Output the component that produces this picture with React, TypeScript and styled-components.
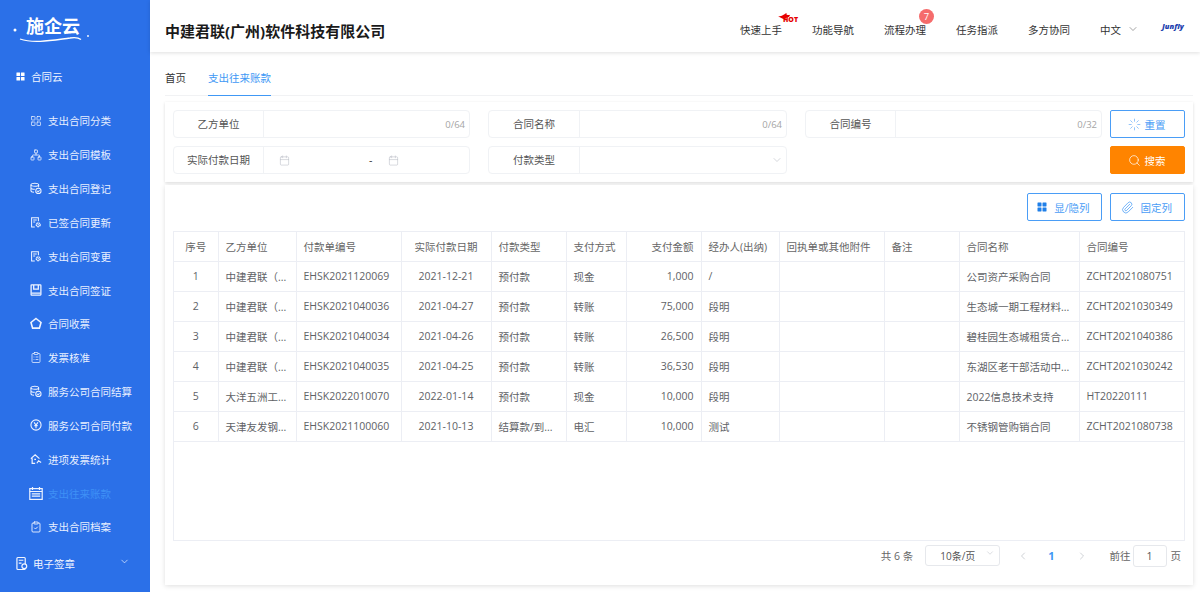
import React from 'react';
import styled, { createGlobalStyle } from 'styled-components';
import { LayoutGrid, Network, ClipboardList, Calendar, ClipboardCheck, ChevronDown, ChevronLeft, ChevronRight, Search, Paperclip, Loader } from 'lucide-react';

const Global = createGlobalStyle`
  html, body { margin: 0; padding: 0; width: 1200px; height: 592px; overflow: hidden; background: #fff; }
  body, button, input { font-family: "Open Sans", "Noto Sans CJK SC", sans-serif; }
  * { box-sizing: border-box; }
`;

const Page = styled.div`display: flex; width: 1200px; height: 592px; overflow: hidden;`;
const Sidebar = styled.aside`width: 150px; flex: none; background: #2b70e8; color: #fff; display: flex; flex-direction: column;`;
const LogoBox = styled.div`height: 52px; flex: none; display: flex; padding: 14px 0 0 26px; position: relative;`;
const LogoText = styled.div`font-size: 18px; font-weight: 700; line-height: 24px; color: #fff; white-space: nowrap;`;
const LogoSwoosh = styled.svg`position: absolute; left: 11px; top: 26px;`;
const GroupRow = styled.div<{ $mt: number; $gap: number }>`display: flex; align-items: center; gap: ${p => p.$gap}px; padding-left: 16px; margin-top: ${p => p.$mt}px; height: 20px; font-size: 10.5px; position: relative; color: #f1f5ff;`;
const GroupChevron = styled.span`position: absolute; left: 119px; top: 2px; display: flex;`;
const MenuList = styled.nav`display: flex; flex-direction: column; margin-top: 18px;`;
const MenuItem = styled.div<{ $active?: boolean }>`height: 33.83px; display: flex; align-items: center; gap: 6px; padding-left: 30px; font-size: 10.5px; color: ${p => (p.$active ? '#3f90f6' : '#e8efff')};`;
const MenuIcon = styled.span`width: 12px; height: 14px; display: flex; align-items: center; justify-content: center; color: #eef3ff;`;

const Main = styled.main`flex: 1; min-width: 0; display: flex; flex-direction: column; background: #fff;`;
const Header = styled.header`height: 52px; flex: none; display: flex; align-items: center; padding: 8px 0 0 15px; box-shadow: 0 1px 4px rgba(0, 0, 0, 0.13); position: relative; z-index: 2; background: #fff;`;
const Title = styled.h1`font-size: 15px; margin: 0; font-weight: 700; color: #1a1a1a; flex: 1; white-space: nowrap;`;
const TopNav = styled.div`display: flex; align-items: center; font-size: 10.5px; color: #333; position: relative; top: -1px;`;
const NavItem = styled.span`width: 72px; position: relative; white-space: nowrap;`;
const Hot = styled.span`position: absolute; left: 37px; top: -12px; width: 19px; height: 11px;`;
const HotText = styled.span`font-size: 7px; font-weight: 800; color: #e60000; line-height: 7px; position: absolute; left: 6px; top: 6px;`;
const Badge = styled.span`position: absolute; left: 35px; top: -13px; width: 15px; height: 15px; border-radius: 50%; background: #f56c6c; color: #fff; font-size: 9.5px; line-height: 15px; text-align: center;`;
const Lang = styled.span`width: 62px; display: flex; align-items: center; gap: 6px;`;
const BrandLogo = styled.span`width: 38px; font-size: 7.5px; font-weight: 800; font-style: italic; color: #1d3fae; position: relative; top: -3px;`;

const Tabs = styled.div`height: 34px; margin: 10px 7px 0 15px; flex: none; display: flex; border-bottom: 1px solid #f1f2f4; font-size: 10.5px; color: #333;`;
const Tab = styled.div<{ $active?: boolean }>`height: 34px; line-height: 32px; margin-right: 22px; color: ${p => (p.$active ? '#4098f5' : '#333')}; border-bottom: ${p => (p.$active ? '1.5px solid #4098f5' : '0')};`;

const FilterPanel = styled.section`margin: 6px 7px 0 15px; height: 80px; flex: none; padding: 8px 8px 0 8px; display: flex; gap: 8px; box-shadow: 0 1px 3px rgba(0, 0, 0, 0.14); background: #fff;`;
const FilterGrid = styled.div`display: grid; grid-template-columns: 297px 299px 297px; grid-auto-rows: 28px; column-gap: 18px; row-gap: 8px;`;
const Field = styled.div`display: flex; border: 1px solid #f0f2f5; border-radius: 4px; height: 28px; font-size: 10.5px; color: #555;`;
const FieldLabel = styled.div<{ $w?: number }>`width: ${p => p.$w ?? 90}px; flex: none; text-align: center; line-height: 26px; border-right: 1px solid #f0f2f5;`;
const FieldBody = styled.div<{ $pr?: number }>`flex: 1; display: flex; align-items: center; justify-content: flex-end; padding-right: ${p => p.$pr ?? 4}px; color: #a5a5a5; font-size: 9.5px;`;
const DateBody = styled.div`flex: 1; display: flex; align-items: center; padding-left: 15px; color: #333;`;
const DateDash = styled.span`margin: 0 16px 0 79px; font-size: 10.5px;`;
const Actions = styled.div`display: flex; flex-direction: column; gap: 8px;`;
const Btn = styled.button<{ $primary?: boolean }>`width: 75px; height: 28px; border-radius: 2px; border: 1px solid ${p => (p.$primary ? '#ff8400' : '#4a9df6')}; background: ${p => (p.$primary ? '#ff8400' : '#fff')}; color: ${p => (p.$primary ? '#fff' : '#4a9df6')}; font-size: 10.5px; display: flex; align-items: center; justify-content: center; gap: 4px; padding: 0 2px 0 0;`;

const TablePanel = styled.section`margin: 3px 7px 0 15px; height: 400px; flex: none; padding: 8px; box-shadow: 0 1px 5px rgba(0, 0, 0, 0.13); display: flex; flex-direction: column; background: #fff;`;
const Toolbar = styled.div`display: flex; justify-content: flex-end; gap: 8px; height: 38px; flex: none;`;
const TableWrap = styled.div`height: 310px; flex: none; border: 1px solid #eceef4;`;
const Table = styled.table`border-collapse: collapse; table-layout: fixed; width: 1010px; font-size: 10.5px; color: #606266;`;
const Th = styled.th<{ $a?: string }>`height: 29px; font-weight: 400; color: #666; text-align: ${p => p.$a ?? 'left'}; padding: 0 7px; border-right: 1px solid #eceef4; border-bottom: 1px solid #eceef4; white-space: nowrap; &:last-child { border-right: 0; }`;
const Td = styled.td<{ $a?: string }>`height: 30px; padding: 0 7px; text-align: ${p => p.$a ?? 'left'}; border-right: 1px solid #eceef4; border-bottom: 1px solid #eceef4; white-space: nowrap; &:last-child { border-right: 0; }`;

const Pager = styled.div`display: flex; align-items: center; justify-content: flex-end; height: 28px; font-size: 10.5px; color: #666; padding: 1px 4px 0 0;`;
const PageSelect = styled.div`width: 75px; height: 21px; border: 1px solid #e6e8ec; border-radius: 3px; margin: 0 17px 0 12px; display: flex; align-items: center; font-size: 10px; padding-left: 14px; position: relative; color: #555;`;
const SelectChevron = styled.span`position: absolute; right: 4px; top: 2px; display: flex;`;
const PageNum = styled.span`color: #4098f5; font-weight: 700; margin: 0 21px 0 19px; font-size: 11px;`;
const PageInput = styled.div`width: 34px; height: 22px; border: 1px solid #e6e8ec; border-radius: 3px; text-align: center; line-height: 20px; margin: 0 4px 0 2px; color: #555;`;
const PrevNext = styled.span<{ $mr?: number }>`display: flex; color: #b5b9c0; margin-right: ${p => p.$mr ?? 0}px;`;

const DbCheck = () => (
  <svg width="15" height="15" viewBox="0 0 15 15" fill="none" stroke="currentColor" strokeWidth={1.3}>
    <ellipse cx="6" cy="2.8" rx="4.8" ry="1.9" />
    <path d="M1.2 2.8v7.4c0 1 1.6 1.8 3.8 1.9M10.8 2.8v3M1.2 6.5c0 1 2.2 1.9 4.8 1.9" />
    <circle cx="10.5" cy="10.5" r="3.3" />
    <path d="M9 10.5l1.2 1.2 1.8-2" />
  </svg>
);
const FileGear = () => (
  <svg width="15" height="15" viewBox="0 0 15 15" fill="none" stroke="currentColor" strokeWidth={1.3}>
    <path d="M6 13H2V1.5h8.500V6" />
    <path d="M4 4.5h4.500M4 7h2.500" />
    <circle cx="10.3" cy="10.3" r="2.4" strokeWidth={1.7} strokeDasharray="2 .6" />
    <circle cx="10.3" cy="10.3" r=".8" fill="currentColor" stroke="none" />
  </svg>
);
const BookIcon = () => (
  <svg width="14" height="14" viewBox="0 0 13 13" fill="none" stroke="currentColor" strokeWidth={1.4}>
    <rect x="1.2" y="1" width="10.6" height="11" rx="0.5" />
    <path d="M4 1v4.6h5V1M1.5 9.8h10" />
  </svg>
);
const HomeShape = () => (
  <svg width="13" height="13" viewBox="0 0 12 12" fill="none" stroke="currentColor" strokeWidth={1.6}>
    <path d="M6 1 11 5 9.4 10.6H2.6L1 5z" />
  </svg>
);
const YenCircle = () => (
  <svg width="14" height="14" viewBox="0 0 13 13" fill="none" stroke="currentColor" strokeWidth={1.2}>
    <circle cx="6.5" cy="6.5" r="5.5" />
    <path d="M4.4 3.6 6.5 6.5 8.6 3.6M6.5 6.5V10M4.7 7.2h3.6" />
  </svg>
);
const HouseChart = () => (
  <svg width="15" height="14" viewBox="0 0 14 13" fill="none" stroke="currentColor" strokeWidth={1.4}>
    <path d="M1 6 6 1.5 11 6M2.5 5.5V11.500H6M8 11.500l2-3 3 2" />
    <path d="M5 7h2" />
  </svg>
);
const FileSeal = () => (
  <svg width="12" height="15" viewBox="0 0 13 15" fill="none" stroke="currentColor" strokeWidth={1.3}>
    <rect x="1" y="1" width="9" height="13" rx="1" />
    <path d="M3 4h5M3 7h3" />
    <circle cx="9" cy="10.5" r="2.6" fill="#2b70e8" />
  </svg>
);
const LedgerCalendar = () => (
  <svg width="14" height="13" viewBox="0 0 14 13" fill="none" stroke="currentColor" strokeWidth={1.2} style={{ flex: 'none' }}>
    <rect x="0.8" y="1.6" width="12.400" height="10.800" />
    <path d="M3.500 0v3M10.500 0v3M.8 4.500h12.400M2.800 6.800h8.400M2.800 9.200h8.400" />
  </svg>
);
const FourSquares = ({ size, color }: { size: number; color: string }) => (
  <svg width={size} height={size} viewBox="0 0 10 10" fill={color}>
    <rect x="0.5" y="0.5" width="4" height="4" rx="0.4" />
    <rect x="5.5" y="0.5" width="4" height="4" rx="0.4" />
    <rect x="0.5" y="5.5" width="4" height="4" rx="0.4" />
    <rect x="5.5" y="5.5" width="4" height="4" rx="0.4" />
  </svg>
);

const menu: { label: string; icon: React.ReactNode; active?: boolean }[] = [
  { label: '支出合同分类', icon: <LayoutGrid size={14} strokeWidth={1.4} /> },
  { label: '支出合同模板', icon: <Network size={14} strokeWidth={1.6} /> },
  { label: '支出合同登记', icon: <DbCheck /> },
  { label: '已签合同更新', icon: <FileGear /> },
  { label: '支出合同变更', icon: <FileGear /> },
  { label: '支出合同签证', icon: <BookIcon /> },
  { label: '合同收票', icon: <HomeShape /> },
  { label: '发票核准', icon: <ClipboardList size={15} strokeWidth={1.5} /> },
  { label: '服务公司合同结算', icon: <DbCheck /> },
  { label: '服务公司合同付款', icon: <YenCircle /> },
  { label: '进项发票统计', icon: <HouseChart /> },
  { label: '支出往来账款', icon: <LedgerCalendar />, active: true },
  { label: '支出合同档案', icon: <ClipboardCheck size={16} strokeWidth={1.8} /> },
];

const navItems = ['快速上手', '功能导航', '流程办理', '任务指派', '多方协同'];

const cols: { t: string; w: number; a?: string; h?: string }[] = [
  { t: '序号', w: 44, a: 'center', h: 'center' },
  { t: '乙方单位', w: 78 },
  { t: '付款单编号', w: 105 },
  { t: '实际付款日期', w: 90, a: 'center', h: 'center' },
  { t: '付款类型', w: 75 },
  { t: '支付方式', w: 60 },
  { t: '支付金额', w: 75, a: 'right', h: 'right' },
  { t: '经办人(出纳)', w: 78 },
  { t: '回执单或其他附件', w: 105 },
  { t: '备注', w: 75 },
  { t: '合同名称', w: 120 },
  { t: '合同编号', w: 105 },
];

const rows = [
  ['1', '中建君联（...', 'EHSK2021120069', '2021-12-21', '预付款', '现金', '1,000', '/', '', '', '公司资产采购合同', 'ZCHT2021080751'],
  ['2', '中建君联（...', 'EHSK2021040036', '2021-04-27', '预付款', '转账', '75,000', '段明', '', '', '生态城一期工程材料...', 'ZCHT2021030349'],
  ['3', '中建君联（...', 'EHSK2021040034', '2021-04-26', '预付款', '转账', '26,500', '段明', '', '', '碧桂园生态城租赁合...', 'ZCHT2021040386'],
  ['4', '中建君联（...', 'EHSK2021040035', '2021-04-25', '预付款', '转账', '36,530', '段明', '', '', '东湖区老干部活动中...', 'ZCHT2021030242'],
  ['5', '大洋五洲工...', 'EHSK2022010070', '2022-01-14', '预付款', '现金', '10,000', '段明', '', '', '2022信息技术支持', 'HT20220111'],
  ['6', '天津友发钢...', 'EHSK2021100060', '2021-10-13', '结算款/到...', '电汇', '10,000', '测试', '', '', '不锈钢管购销合同', 'ZCHT2021080738'],
];

const CalIcon = () => <Calendar size={11} strokeWidth={1.2} color="#b8bcc4" />;

export default function App() {
  return (
    <Page>
      <Global />
      <Sidebar>
        <LogoBox>
          <LogoText>施企云</LogoText>
          <LogoSwoosh width="82" height="22" viewBox="0 0 82 22" fill="none">
            <circle cx="4" cy="4" r="1.5" fill="#fff" />
            <path d="M9 13c14 5 34 1 50-1 6-1 9 0 11 1.500" stroke="#fff" strokeWidth="1.3" />
            <circle cx="77" cy="10" r="0.9" fill="#fff" />
          </LogoSwoosh>
        </LogoBox>
        <GroupRow $mt={14} $gap={6}>
          <FourSquares size={9} color="#fff" />
          合同云
        </GroupRow>
        <MenuList>
          {menu.map(m => (
            <MenuItem key={m.label} $active={m.active}>
              <MenuIcon>{m.icon}</MenuIcon>
              {m.label}
            </MenuItem>
          ))}
        </MenuList>
        <GroupRow $mt={10} $gap={5}>
          <FileSeal />
          电子签章
          <GroupChevron><ChevronDown size={11} strokeWidth={1.5} /></GroupChevron>
        </GroupRow>
      </Sidebar>
      <Main>
        <Header>
          <Title>中建君联(广州)软件科技有限公司</Title>
          <TopNav>
            {navItems.map(n => (
              <NavItem key={n}>
                {n}
                {n === '快速上手' && (
                  <Hot>
                    <svg width="16" height="8" viewBox="0 0 12 7">
                      <path d="M0 3c2 0 3-.5 4-1 1-.5 2-1.500 3.500-2-.3.8-.3 1.300.2 1.600C9 2 9.600 1.800 10.500 1.500L9.500 3.500c-2 0-3 1-3.500 2.500C4.500 5 2 4 0 3z" fill="#e60000" />
                    </svg>
                    <HotText>HOT</HotText>
                  </Hot>
                )}
                {n === '流程办理' && <Badge>7</Badge>}
              </NavItem>
            ))}
            <Lang>中文 <ChevronDown size={12} strokeWidth={1.2} color="#666" /></Lang>
            <BrandLogo>Junfly</BrandLogo>
          </TopNav>
        </Header>
        <Tabs>
          <Tab>首页</Tab>
          <Tab $active>支出往来账款</Tab>
        </Tabs>
        <FilterPanel>
          <FilterGrid>
            <Field><FieldLabel>乙方单位</FieldLabel><FieldBody>0/64</FieldBody></Field>
            <Field><FieldLabel $w={91}>合同名称</FieldLabel><FieldBody>0/64</FieldBody></Field>
            <Field><FieldLabel>合同编号</FieldLabel><FieldBody>0/32</FieldBody></Field>
            <Field>
              <FieldLabel>实际付款日期</FieldLabel>
              <DateBody><CalIcon /><DateDash>-</DateDash><CalIcon /></DateBody>
            </Field>
            <Field>
              <FieldLabel $w={91}>付款类型</FieldLabel>
              <FieldBody $pr={3}><ChevronDown size={12} strokeWidth={1.2} color="#b8bcc4" /></FieldBody>
            </Field>
          </FilterGrid>
          <Actions>
            <Btn><Loader size={13} strokeWidth={1.1} />重置</Btn>
            <Btn $primary><Search size={13} strokeWidth={1.3} />搜索</Btn>
          </Actions>
        </FilterPanel>
        <TablePanel>
          <Toolbar>
            <Btn><FourSquares size={10} color="#1f7fe8" />&nbsp;显/隐列</Btn>
            <Btn><Paperclip size={13} strokeWidth={1.4} />&nbsp;固定列</Btn>
          </Toolbar>
          <TableWrap>
            <Table>
              <colgroup>
                {cols.map(c => <col key={c.t} style={{ width: c.w }} />)}
              </colgroup>
              <thead>
                <tr>{cols.map(c => <Th key={c.t} $a={c.h}>{c.t}</Th>)}</tr>
              </thead>
              <tbody>
                {rows.map(r => (
                  <tr key={r[0]}>
                    {r.map((v, i) => <Td key={i} $a={cols[i].a}>{v}</Td>)}
                  </tr>
                ))}
              </tbody>
            </Table>
          </TableWrap>
          <Pager>
            共 6 条
            <PageSelect>
              10条/页
              <SelectChevron><ChevronDown size={10} strokeWidth={1.2} color="#b8bcc4" /></SelectChevron>
            </PageSelect>
            <PrevNext><ChevronLeft size={12} strokeWidth={1.3} /></PrevNext>
            <PageNum>1</PageNum>
            <PrevNext $mr={22}><ChevronRight size={12} strokeWidth={1.3} /></PrevNext>
            前往
            <PageInput>1</PageInput>
            页
          </Pager>
        </TablePanel>
      </Main>
    </Page>
  );
}
